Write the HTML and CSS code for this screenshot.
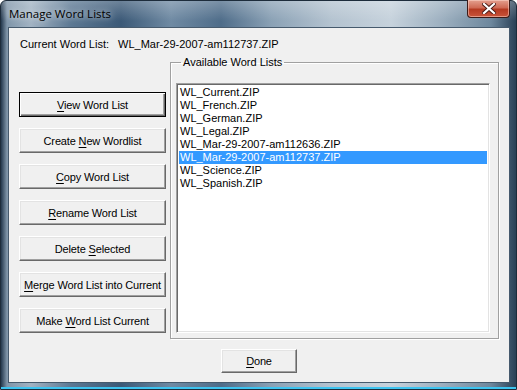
FILE: index.html
```html
<!DOCTYPE html>
<html lang="en">
  <head>
    <meta charset="UTF-8" />
    <title>Manage Word Lists</title>
    <link rel="stylesheet" href="styles.css">
  </head>
  <body>
    <div class="window">
      <div class="titlebar">
        <span class="title">Manage Word Lists</span>
        <button class="close-btn" aria-label="Close">
          <svg width="14" height="11" viewBox="0 0 14 11">
            <path d="M2 1 L12 10 M12 1 L2 10" stroke="#4a1a14" stroke-width="4" stroke-linecap="square" />
            <path d="M2 1 L12 10 M12 1 L2 10" stroke="#fff" stroke-width="2.2" stroke-linecap="square" />
          </svg>
        </button>
      </div>

      <div class="client">
        <div class="current">
          <span class="current-label">Current Word List:</span>
          <span class="current-value">WL_Mar-29-2007-am112737.ZIP</span>
        </div>

        <div class="main">
          <div class="actions">
            <button class="btn default"><u>V</u>iew Word List</button>
            <button class="btn">Create <u>N</u>ew Wordlist</button>
            <button class="btn"><u>C</u>opy Word List</button>
            <button class="btn"><u>R</u>ename Word List</button>
            <button class="btn">Delete <u>S</u>elected</button>
            <button class="btn"><u>M</u>erge Word List into Current</button>
            <button class="btn">Make <u>W</u>ord List Current</button>
          </div>

          <fieldset class="group">
            <legend>Available Word Lists</legend>
            <ul class="listbox">
              <li>WL_Current.ZIP</li>
              <li>WL_French.ZIP</li>
              <li>WL_German.ZIP</li>
              <li>WL_Legal.ZIP</li>
              <li>WL_Mar-29-2007-am112636.ZIP</li>
              <li class="selected">WL_Mar-29-2007-am112737.ZIP</li>
              <li>WL_Science.ZIP</li>
              <li>WL_Spanish.ZIP</li>
            </ul>
          </fieldset>
        </div>

        <div class="footer">
          <button class="btn done"><u>D</u>one</button>
        </div>
      </div>
    </div>
  </body>
</html>
```

FILE: styles.css
```css
* {
  margin: 0;
  padding: 0;
  box-sizing: border-box;
}

body {
  width: 517px;
  height: 390px;
  overflow: hidden;
  background: #fff;
  font-family: "Liberation Sans", Arial, sans-serif;
  font-size: 11px;
  color: #000;
}

/* aero frame */
.window {
  width: 517px;
  height: 390px;
  border: 1px solid #1d2c3b;
  border-radius: 6px 6px 0 0;
  background:
    linear-gradient(180deg, rgba(255, 255, 255, 0.25) 0px, rgba(255, 255, 255, 0) 20px),
    linear-gradient(90deg, #24384d 0px, #7f95a9 6px, #a2b3c3 30px, #5c7893 70px, #3b5977 120px, #6f8aa3 170px, #4e6c89 220px, #8aa1b5 270px, #b4c3d0 330px, #c6d2dc 390px, #9db0c0 440px, #6d879d 490px, #243a50 517px);
  box-shadow: inset 0 -2px 0 #3cc3ef;
  display: flex;
  flex-direction: column;
}

.titlebar {
  height: 26px;
  display: flex;
  justify-content: space-between;
  align-items: flex-start;
  padding-left: 8px;
}

.title {
  font-family: "Open Sans", "DejaVu Sans", sans-serif;
  font-size: 11.5px;
  line-height: 14px;
  margin-top: 6px;
  color: #000;
  text-shadow: 0 0 6px rgba(255, 255, 255, 0.9);
}

.close-btn {
  width: 43px;
  height: 18px;
  margin-right: 6px;
  margin-top: -1px;
  border: 1px solid #3c1b17;
  border-top: none;
  border-radius: 0 0 4px 4px;
  background: linear-gradient(180deg, #e4a08f 0%, #cf6a55 45%, #b53a22 55%, #c9543a 100%);
  box-shadow: inset 0 0 0 1px rgba(255, 220, 210, 0.5);
  display: flex;
  align-items: center;
  justify-content: center;
}

.client {
  margin: 0 6px 6px 7px;
  flex: 1;
  border: 1px solid #465a6d;
  background: #f0f0f0;
  display: flex;
  flex-direction: column;
}

.current {
  margin: 10px 0 0 11px;
  height: 13px;
  line-height: 13px;
  display: flex;
  gap: 9px;
}

.main {
  display: flex;
  align-items: flex-start;
  margin-top: 5px;
}

.actions {
  display: flex;
  flex-direction: column;
  gap: 11px;
  margin: 36px 0 0 10px;
}

.btn {
  font-family: "Liberation Sans", Arial, sans-serif;
  font-size: 11px;
  letter-spacing: -0.15px;
  color: #000;
  background: #f0f0f0;
  width: 147px;
  height: 25px;
  border: 1px solid;
  border-color: #fff #696969 #696969 #fff;
  box-shadow: inset -1px -1px 0 #a0a0a0, inset 1px 1px 0 #e3e3e3;
  cursor: pointer;
}

.btn.default {
  border: 1px solid #000;
  box-shadow: inset 1px 1px 0 #fff, inset -1px -1px 0 #696969, inset -2px -2px 0 #a0a0a0;
}

.btn u {
  text-decoration-thickness: 1px;
  text-underline-offset: 2px;
}

.group {
  margin-left: 4px;
  width: 329px;
  height: 283px;
  border: 1px solid #a0a0a0;
  box-shadow: inset 1px 1px 0 #fff, 1px 1px 0 #fff;
  padding: 14px 8px 5px 5px;
}

.group legend {
  margin-left: 5px;
  padding: 0 2px;
  line-height: 13px;
}

.listbox {
  list-style: none;
  height: 250px;
  background: #fff;
  border: 1px solid;
  border-color: #a0a0a0 #fff #fff #a0a0a0;
  box-shadow: inset 1px 1px 0 #696969, inset -1px -1px 0 #e3e3e3;
  padding: 2px 2px;
}

.listbox li {
  height: 13px;
  line-height: 13px;
  padding-left: 1px;
  white-space: nowrap;
}

.listbox li.selected {
  background: #3399ff;
  color: #fff;
}

.footer {
  display: flex;
  padding-left: 212px;
  margin-top: 10px;
}

.btn.done {
  width: 76px;
  height: 24px;
}
```
